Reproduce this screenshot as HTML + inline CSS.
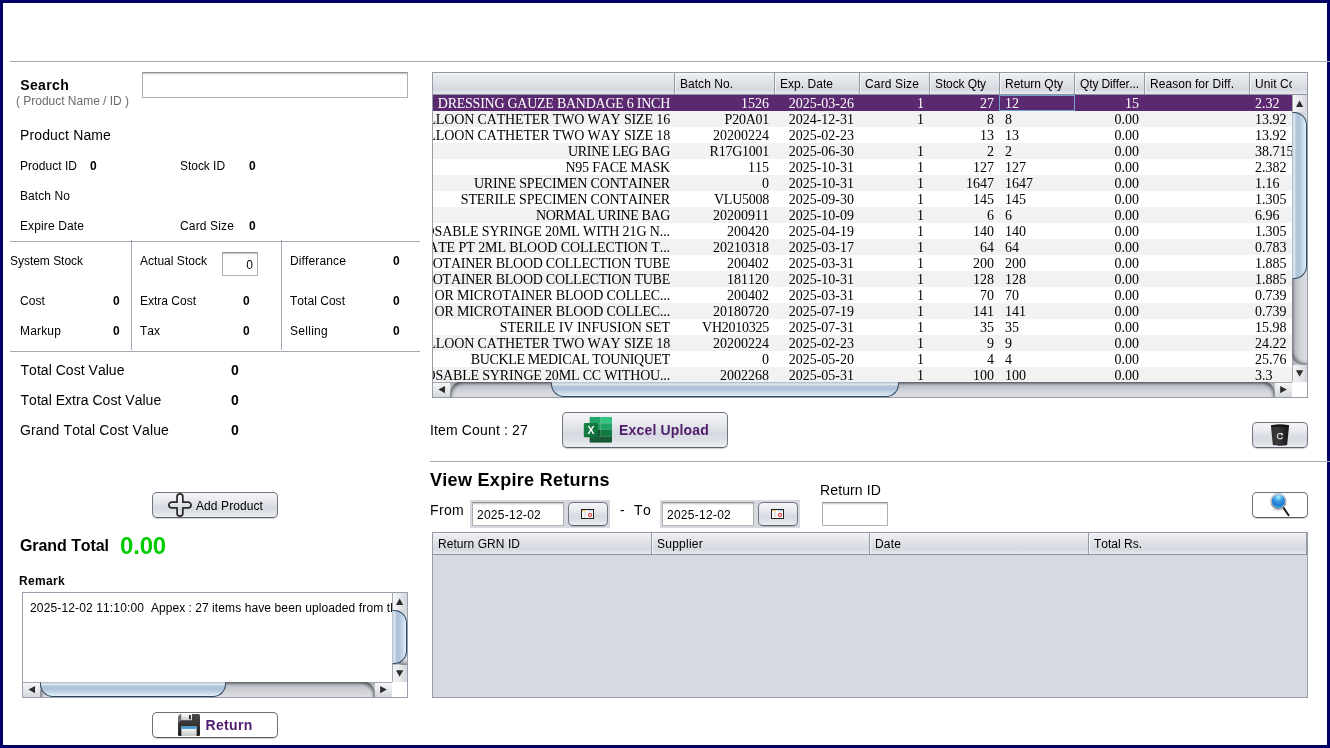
<!DOCTYPE html>
<html lang="en"><head><meta charset="utf-8"><title>Expire Return</title>
<style>
html,body{margin:0;padding:0;}
body{font-kerning:none;width:1330px;height:748px;position:relative;overflow:hidden;background:#fff;font-family:"Liberation Sans",Arial,sans-serif;font-size:12px;color:#000;}
body div,body svg{position:absolute;box-sizing:border-box;}
.t{white-space:pre;}
.frame{left:0;top:0;width:1330px;height:748px;border:3px solid #000066;z-index:5;pointer-events:none;}
.sep{background:#a2a8b4;z-index:6;}
.tf{background:#fff;border:1px solid #adadad;border-top-color:#8f8f8f;border-bottom-color:#b4b4b4;box-shadow:inset 0 1px 0 #d2d2d2,inset 0 2px 0 #efefef;}
.btn{border:1px solid #70757f;border-bottom-color:#5d626b;border-radius:5px;background:linear-gradient(#f5f6f8 0%,#e9ebef 30%,#d6d9e0 62%,#dcdfe5 78%,#eceef2 100%);box-shadow:0 1px 0 rgba(120,125,135,.35);}
.btnw{border:1px solid #6a6f78;border-bottom-color:#565b64;border-radius:5px;background:#fff;box-shadow:0 1px 0 rgba(120,125,135,.35);}
.hdr{background:linear-gradient(#f6f7f9 0%,#ecedf1 10%,#dfe1e6 48%,#d5d8df 78%,#dee1e7 90%,#e8eaef 100%);border-top:1px solid #9299a5;border-bottom:1px solid #8e949e;}
.hsep{width:2px;background:linear-gradient(to right,#9399a5 0,#9399a5 1px,#f4f5f7 1px,#f4f5f7 2px);}
.row{left:0;width:860px;height:16px;}
.c{top:0;height:16px;line-height:18px;font-family:"Liberation Serif","Times New Roman",serif;font-size:14px;white-space:pre;overflow:hidden;}
.r{text-align:right;}
.sel{background:#5a2970;color:#fff;}
.odd{background:#f2f2f2;}
.arrowbtn{background:linear-gradient(to right,#f4f5f7,#e6e8eb 50%,#d3d6db);border-left:1px solid #a3a8b1;}
.arrowbtnh{background:linear-gradient(#f4f5f7,#e6e8eb 50%,#d3d6db);border-top:1px solid #a3a8b1;}
</style></head><body><div id="root" style="left:0;top:0;width:1330px;height:748px;will-change:transform;">

<div class="frame"></div>
<div class="sep" style="left:10px;top:61px;width:1320px;height:1px;"></div>
<div class="sep" style="left:10px;top:241px;width:410px;height:1px;"></div>
<div class="sep" style="left:10px;top:351px;width:410px;height:1px;"></div>
<div class="sep" style="left:131px;top:240px;width:1px;height:110px;"></div>
<div class="sep" style="left:281px;top:240px;width:1px;height:110px;"></div>
<div class="sep" style="left:430px;top:461px;width:900px;height:1px;"></div>
<div class="t" style="top:77px;font-size:14px;line-height:16px;height:16px;left:20.3px;font-weight:bold;letter-spacing:0.35px;">Search</div>
<div class="t" style="top:94px;font-size:12px;line-height:14px;height:14px;left:16px;color:#6b6b6b;letter-spacing:-0.017px;">( Product Name / ID )</div>
<div class="tf" style="left:142px;top:72px;width:266px;height:26px;"></div>
<div class="t" style="top:127px;font-size:14px;line-height:16px;height:16px;left:20px;letter-spacing:0.127px;">Product Name</div>
<div class="t" style="top:159px;font-size:12px;line-height:14px;height:14px;left:20px;letter-spacing:0.031px;">Product ID</div>
<div class="t" style="top:159px;font-size:12px;line-height:14px;height:14px;left:90px;font-weight:bold;">0</div>
<div class="t" style="top:159px;font-size:12px;line-height:14px;height:14px;left:180px;letter-spacing:-0.043px;">Stock ID</div>
<div class="t" style="top:159px;font-size:12px;line-height:14px;height:14px;left:249px;font-weight:bold;">0</div>
<div class="t" style="top:189px;font-size:12px;line-height:14px;height:14px;left:20px;letter-spacing:0.08px;">Batch No</div>
<div class="t" style="top:219px;font-size:12px;line-height:14px;height:14px;left:20px;letter-spacing:0.119px;">Expire Date</div>
<div class="t" style="top:219px;font-size:12px;line-height:14px;height:14px;left:180px;letter-spacing:0.147px;">Card Size</div>
<div class="t" style="top:219px;font-size:12px;line-height:14px;height:14px;left:249px;font-weight:bold;">0</div>
<div class="t" style="top:254px;font-size:12px;line-height:14px;height:14px;left:10px;letter-spacing:-0.03px;">System Stock</div>
<div class="t" style="top:254px;font-size:12px;line-height:14px;height:14px;left:140px;letter-spacing:0.025px;">Actual Stock</div>
<div class="tf" style="left:222px;top:252px;width:36px;height:24px;"></div>
<div class="t" style="top:258px;font-size:12px;line-height:14px;height:14px;right:1077px;text-align:right;">0</div>
<div class="t" style="top:254px;font-size:12px;line-height:14px;height:14px;left:290px;letter-spacing:0.132px;">Differance</div>
<div class="t" style="top:254px;font-size:12px;line-height:14px;height:14px;left:393px;font-weight:bold;">0</div>
<div class="t" style="top:294px;font-size:12px;line-height:14px;height:14px;left:20px;letter-spacing:0.082px;">Cost</div>
<div class="t" style="top:294px;font-size:12px;line-height:14px;height:14px;left:113px;font-weight:bold;">0</div>
<div class="t" style="top:294px;font-size:12px;line-height:14px;height:14px;left:140px;">Extra Cost</div>
<div class="t" style="top:294px;font-size:12px;line-height:14px;height:14px;left:243px;font-weight:bold;">0</div>
<div class="t" style="top:294px;font-size:12px;line-height:14px;height:14px;left:290px;letter-spacing:0.032px;">Total Cost</div>
<div class="t" style="top:294px;font-size:12px;line-height:14px;height:14px;left:393px;font-weight:bold;">0</div>
<div class="t" style="top:324px;font-size:12px;line-height:14px;height:14px;left:20px;letter-spacing:0.165px;">Markup</div>
<div class="t" style="top:324px;font-size:12px;line-height:14px;height:14px;left:113px;font-weight:bold;">0</div>
<div class="t" style="top:324px;font-size:12px;line-height:14px;height:14px;left:140px;">Tax</div>
<div class="t" style="top:324px;font-size:12px;line-height:14px;height:14px;left:243px;font-weight:bold;">0</div>
<div class="t" style="top:324px;font-size:12px;line-height:14px;height:14px;left:290px;letter-spacing:0.284px;">Selling</div>
<div class="t" style="top:324px;font-size:12px;line-height:14px;height:14px;left:393px;font-weight:bold;">0</div>
<div class="t" style="top:362px;font-size:14px;line-height:16px;height:16px;left:20.5px;letter-spacing:0.03px;">Total Cost Value</div>
<div class="t" style="top:362px;font-size:14px;line-height:16px;height:16px;left:231px;font-weight:bold;">0</div>
<div class="t" style="top:392px;font-size:14px;line-height:16px;height:16px;left:20.5px;letter-spacing:0.03px;">Total Extra Cost Value</div>
<div class="t" style="top:392px;font-size:14px;line-height:16px;height:16px;left:231px;font-weight:bold;">0</div>
<div class="t" style="top:422px;font-size:14px;line-height:16px;height:16px;left:20px;letter-spacing:0.123px;">Grand Total Cost Value</div>
<div class="t" style="top:422px;font-size:14px;line-height:16px;height:16px;left:231px;font-weight:bold;">0</div>
<div class="btn" style="left:152px;top:492px;width:126px;height:26px;"></div>
<svg style="left:167px;top:492px" width="26" height="26" viewBox="0 0 26 26"><path d="M10.05 10.15 V4.85 A2.9 2.9 0 0 1 15.85 4.85 V10.15 H21.15 A2.9 2.9 0 0 1 21.15 15.95 H15.85 V21.25 A2.9 2.9 0 0 1 10.05 21.25 V15.95 H4.75 A2.9 2.9 0 0 1 4.75 10.15 Z" fill="none" stroke="#2b2b2b" stroke-width="1.75" stroke-linejoin="round"/></svg>
<div class="t" style="top:499px;font-size:12px;line-height:14px;height:14px;left:196px;letter-spacing:0.088px;">Add Product</div>
<div class="t" style="top:537px;font-size:16px;line-height:17px;height:17px;left:20px;font-weight:bold;letter-spacing:-0.072px;">Grand Total</div>
<div class="t" style="top:532px;font-size:24px;line-height:27px;height:27px;left:120px;font-weight:bold;color:#00cc00;letter-spacing:-0.176px;">0.00</div>
<div class="t" style="top:574px;font-size:12px;line-height:14px;height:14px;left:19px;font-weight:bold;letter-spacing:0.331px;">Remark</div>
<div style="left:22px;top:592px;width:386px;height:106px;border:1px solid #9aa1ae;background:#fff;"></div>
<div class="t" style="left:30px;top:601px;font-size:12px;line-height:14px;height:14px;width:362px;overflow:hidden;"><span style="letter-spacing:0.139px">2025-12-02 11:10:00  </span><span style="letter-spacing:0.027px">Appex : 27 </span><span style="letter-spacing:0.108px">items have been uploaded from the excel sheet</span></div>
<div class="btnw" style="left:152px;top:712px;width:126px;height:26px;"></div>
<svg style="left:177px;top:713px" width="24" height="24" viewBox="0 0 24 24">
<defs><linearGradient id="fl1" x1="0" y1="0" x2="0" y2="1"><stop offset="0" stop-color="#4a4a4a"/><stop offset="1" stop-color="#1c1c1c"/></linearGradient>
<linearGradient id="fl2" x1="0" y1="0" x2="0" y2="1"><stop offset="0" stop-color="#ffffff"/><stop offset="1" stop-color="#c9c9c9"/></linearGradient></defs>
<path d="M3.5 1 H21.5 a1.5 1.5 0 0 1 1.5 1.5 V21.5 a1.5 1.5 0 0 1 -1.5 1.5 H2.5 a1.5 1.5 0 0 1 -1.5 -1.5 V3.5 z" fill="url(#fl1)"/>
<path d="M3.6 1 L1 3.6 V10 L8 4.5 L6 1 z" fill="#7d7d7d" opacity=".8"/>
<rect x="4.2" y="1" width="10.8" height="6.2" fill="url(#fl2)"/>
<rect x="12" y="2" width="1.8" height="4.2" fill="#2b2b2b"/>
<rect x="4.4" y="13.6" width="15.2" height="9.4" fill="url(#fl2)"/>
<rect x="4.4" y="13.6" width="15.2" height="2.3" fill="#3d9ddd"/>
</svg>
<div class="t" style="top:717px;font-size:14px;line-height:16px;height:16px;left:205.6px;font-weight:bold;color:#4f1c6e;letter-spacing:0.3px;">Return</div>
<div style="left:432px;top:72px;width:876px;height:326px;border:1px solid #969ca8;border-top:none;background:#fff;"></div>
<div class="hdr" style="left:433px;top:72px;width:874px;height:23px;"></div>
<div class="hsep" style="left:674px;top:73px;width:2px;height:21px;"></div>
<div class="hsep" style="left:774px;top:73px;width:2px;height:21px;"></div>
<div class="hsep" style="left:859px;top:73px;width:2px;height:21px;"></div>
<div class="hsep" style="left:929px;top:73px;width:2px;height:21px;"></div>
<div class="hsep" style="left:999px;top:73px;width:2px;height:21px;"></div>
<div class="hsep" style="left:1074px;top:73px;width:2px;height:21px;"></div>
<div class="hsep" style="left:1144px;top:73px;width:2px;height:21px;"></div>
<div class="hsep" style="left:1249px;top:73px;width:2px;height:21px;"></div>
<div class="t" style="top:77px;font-size:12px;line-height:14px;height:14px;left:680px;letter-spacing:0.034px;">Batch No.</div>
<div class="t" style="top:77px;font-size:12px;line-height:14px;height:14px;left:780px;letter-spacing:0.034px;">Exp. Date</div>
<div class="t" style="top:77px;font-size:12px;line-height:14px;height:14px;left:865px;letter-spacing:0.147px;">Card Size</div>
<div class="t" style="top:77px;font-size:12px;line-height:14px;height:14px;left:935px;letter-spacing:-0.113px;">Stock Qty</div>
<div class="t" style="top:77px;font-size:12px;line-height:14px;height:14px;left:1005px;">Return Qty</div>
<div class="t" style="top:77px;font-size:12px;line-height:14px;height:14px;left:1080px;letter-spacing:-0.13px;">Qty Differ...</div>
<div class="t" style="top:77px;font-size:12px;line-height:14px;height:14px;left:1150px;letter-spacing:0.04px;">Reason for Diff.</div>
<div class="t" style="top:77px;font-size:12px;line-height:14px;height:14px;left:1255px;width:37px;overflow:hidden;letter-spacing:0.073px;">Unit Cost</div>
<div style="left:433px;top:95px;width:859px;height:287px;overflow:hidden;background:#fff;">
<div class="row sel" style="top:0px;">
<div class="c" style="left:0px;width:241px;"><div class="c" style="right:4px;overflow:visible;letter-spacing:-0.255px;">DRESSING GAUZE BANDAGE 6 INCH</div></div>
<div class="c r" style="left:242px;width:99px;padding-right:5px;">1526</div>
<div class="c r" style="left:342px;width:84px;padding-right:5px;">2025-03-26</div>
<div class="c r" style="left:427px;width:69px;padding-right:5px;">1</div>
<div class="c r" style="left:497px;width:69px;padding-right:5px;">27</div>
<div class="c" style="left:567px;width:74px;padding-left:5px;">12</div>
<div class="c r" style="left:642px;width:69px;padding-right:5px;">15</div>
<div class="c" style="left:817px;width:110px;padding-left:5px;">2.32</div>
</div>
<div class="row odd" style="top:16px;">
<div class="c" style="left:0px;width:241px;"><div class="c" style="right:4px;overflow:visible;letter-spacing:-0.144px;">FOLEY BALLOON CATHETER TWO WAY SIZE 16</div></div>
<div class="c r" style="left:242px;width:99px;padding-right:5px;letter-spacing:-0.25px;">P20A01</div>
<div class="c r" style="left:342px;width:84px;padding-right:5px;">2024-12-31</div>
<div class="c r" style="left:427px;width:69px;padding-right:5px;">1</div>
<div class="c r" style="left:497px;width:69px;padding-right:5px;">8</div>
<div class="c" style="left:567px;width:74px;padding-left:5px;">8</div>
<div class="c r" style="left:642px;width:69px;padding-right:5px;">0.00</div>
<div class="c" style="left:817px;width:110px;padding-left:5px;">13.92</div>
</div>
<div class="row" style="top:32px;">
<div class="c" style="left:0px;width:241px;"><div class="c" style="right:4px;overflow:visible;letter-spacing:-0.144px;">FOLEY BALLOON CATHETER TWO WAY SIZE 18</div></div>
<div class="c r" style="left:242px;width:99px;padding-right:5px;">20200224</div>
<div class="c r" style="left:342px;width:84px;padding-right:5px;">2025-02-23</div>
<div class="c r" style="left:497px;width:69px;padding-right:5px;">13</div>
<div class="c" style="left:567px;width:74px;padding-left:5px;">13</div>
<div class="c r" style="left:642px;width:69px;padding-right:5px;">0.00</div>
<div class="c" style="left:817px;width:110px;padding-left:5px;">13.92</div>
</div>
<div class="row odd" style="top:48px;">
<div class="c" style="left:0px;width:241px;"><div class="c" style="right:4px;overflow:visible;letter-spacing:-0.358px;">URINE LEG BAG</div></div>
<div class="c r" style="left:242px;width:99px;padding-right:5px;letter-spacing:-0.25px;">R17G1001</div>
<div class="c r" style="left:342px;width:84px;padding-right:5px;">2025-06-30</div>
<div class="c r" style="left:427px;width:69px;padding-right:5px;">1</div>
<div class="c r" style="left:497px;width:69px;padding-right:5px;">2</div>
<div class="c" style="left:567px;width:74px;padding-left:5px;">2</div>
<div class="c r" style="left:642px;width:69px;padding-right:5px;">0.00</div>
<div class="c" style="left:817px;width:110px;padding-left:5px;">38.715</div>
</div>
<div class="row" style="top:64px;">
<div class="c" style="left:0px;width:241px;"><div class="c" style="right:4px;overflow:visible;letter-spacing:-0.215px;">N95 FACE MASK</div></div>
<div class="c r" style="left:242px;width:99px;padding-right:5px;">115</div>
<div class="c r" style="left:342px;width:84px;padding-right:5px;">2025-10-31</div>
<div class="c r" style="left:427px;width:69px;padding-right:5px;">1</div>
<div class="c r" style="left:497px;width:69px;padding-right:5px;">127</div>
<div class="c" style="left:567px;width:74px;padding-left:5px;">127</div>
<div class="c r" style="left:642px;width:69px;padding-right:5px;">0.00</div>
<div class="c" style="left:817px;width:110px;padding-left:5px;">2.382</div>
</div>
<div class="row odd" style="top:80px;">
<div class="c" style="left:0px;width:241px;"><div class="c" style="right:4px;overflow:visible;letter-spacing:-0.158px;">URINE SPECIMEN CONTAINER</div></div>
<div class="c r" style="left:242px;width:99px;padding-right:5px;">0</div>
<div class="c r" style="left:342px;width:84px;padding-right:5px;">2025-10-31</div>
<div class="c r" style="left:427px;width:69px;padding-right:5px;">1</div>
<div class="c r" style="left:497px;width:69px;padding-right:5px;">1647</div>
<div class="c" style="left:567px;width:74px;padding-left:5px;">1647</div>
<div class="c r" style="left:642px;width:69px;padding-right:5px;">0.00</div>
<div class="c" style="left:817px;width:110px;padding-left:5px;">1.16</div>
</div>
<div class="row" style="top:96px;">
<div class="c" style="left:0px;width:241px;"><div class="c" style="right:4px;overflow:visible;letter-spacing:-0.15px;">STERILE SPECIMEN CONTAINER</div></div>
<div class="c r" style="left:242px;width:99px;padding-right:5px;letter-spacing:-0.25px;">VLU5008</div>
<div class="c r" style="left:342px;width:84px;padding-right:5px;">2025-09-30</div>
<div class="c r" style="left:427px;width:69px;padding-right:5px;">1</div>
<div class="c r" style="left:497px;width:69px;padding-right:5px;">145</div>
<div class="c" style="left:567px;width:74px;padding-left:5px;">145</div>
<div class="c r" style="left:642px;width:69px;padding-right:5px;">0.00</div>
<div class="c" style="left:817px;width:110px;padding-left:5px;">1.305</div>
</div>
<div class="row odd" style="top:112px;">
<div class="c" style="left:0px;width:241px;"><div class="c" style="right:4px;overflow:visible;letter-spacing:-0.369px;">NORMAL URINE BAG</div></div>
<div class="c r" style="left:242px;width:99px;padding-right:5px;">20200911</div>
<div class="c r" style="left:342px;width:84px;padding-right:5px;">2025-10-09</div>
<div class="c r" style="left:427px;width:69px;padding-right:5px;">1</div>
<div class="c r" style="left:497px;width:69px;padding-right:5px;">6</div>
<div class="c" style="left:567px;width:74px;padding-left:5px;">6</div>
<div class="c r" style="left:642px;width:69px;padding-right:5px;">0.00</div>
<div class="c" style="left:817px;width:110px;padding-left:5px;">6.96</div>
</div>
<div class="row" style="top:128px;">
<div class="c" style="left:0px;width:241px;"><div class="c" style="right:4px;overflow:visible;letter-spacing:-0.105px;">DISPOSABLE SYRINGE 20ML WITH 21G N...</div></div>
<div class="c r" style="left:242px;width:99px;padding-right:5px;">200420</div>
<div class="c r" style="left:342px;width:84px;padding-right:5px;">2025-04-19</div>
<div class="c r" style="left:427px;width:69px;padding-right:5px;">1</div>
<div class="c r" style="left:497px;width:69px;padding-right:5px;">140</div>
<div class="c" style="left:567px;width:74px;padding-left:5px;">140</div>
<div class="c r" style="left:642px;width:69px;padding-right:5px;">0.00</div>
<div class="c" style="left:817px;width:110px;padding-left:5px;">1.305</div>
</div>
<div class="row odd" style="top:144px;">
<div class="c" style="left:0px;width:241px;"><div class="c" style="right:4px;overflow:visible;letter-spacing:-0.072px;">SODIUM CITRATE PT 2ML BLOOD COLLECTION T...</div></div>
<div class="c r" style="left:242px;width:99px;padding-right:5px;">20210318</div>
<div class="c r" style="left:342px;width:84px;padding-right:5px;">2025-03-17</div>
<div class="c r" style="left:427px;width:69px;padding-right:5px;">1</div>
<div class="c r" style="left:497px;width:69px;padding-right:5px;">64</div>
<div class="c" style="left:567px;width:74px;padding-left:5px;">64</div>
<div class="c r" style="left:642px;width:69px;padding-right:5px;">0.00</div>
<div class="c" style="left:817px;width:110px;padding-left:5px;">0.783</div>
</div>
<div class="row" style="top:160px;">
<div class="c" style="left:0px;width:241px;"><div class="c" style="right:4px;overflow:visible;letter-spacing:-0.252px;">EDTA MICROTAINER BLOOD COLLECTION TUBE</div></div>
<div class="c r" style="left:242px;width:99px;padding-right:5px;">200402</div>
<div class="c r" style="left:342px;width:84px;padding-right:5px;">2025-03-31</div>
<div class="c r" style="left:427px;width:69px;padding-right:5px;">1</div>
<div class="c r" style="left:497px;width:69px;padding-right:5px;">200</div>
<div class="c" style="left:567px;width:74px;padding-left:5px;">200</div>
<div class="c r" style="left:642px;width:69px;padding-right:5px;">0.00</div>
<div class="c" style="left:817px;width:110px;padding-left:5px;">1.885</div>
</div>
<div class="row odd" style="top:176px;">
<div class="c" style="left:0px;width:241px;"><div class="c" style="right:4px;overflow:visible;letter-spacing:-0.252px;">PLAIN MICROTAINER BLOOD COLLECTION TUBE</div></div>
<div class="c r" style="left:242px;width:99px;padding-right:5px;">181120</div>
<div class="c r" style="left:342px;width:84px;padding-right:5px;">2025-10-31</div>
<div class="c r" style="left:427px;width:69px;padding-right:5px;">1</div>
<div class="c r" style="left:497px;width:69px;padding-right:5px;">128</div>
<div class="c" style="left:567px;width:74px;padding-left:5px;">128</div>
<div class="c r" style="left:642px;width:69px;padding-right:5px;">0.00</div>
<div class="c" style="left:817px;width:110px;padding-left:5px;">1.885</div>
</div>
<div class="row" style="top:192px;">
<div class="c" style="left:0px;width:241px;"><div class="c" style="right:4px;overflow:visible;letter-spacing:-0.165px;">CAPILLARY TUBE OR MICROTAINER BLOOD COLLEC...</div></div>
<div class="c r" style="left:242px;width:99px;padding-right:5px;">200402</div>
<div class="c r" style="left:342px;width:84px;padding-right:5px;">2025-03-31</div>
<div class="c r" style="left:427px;width:69px;padding-right:5px;">1</div>
<div class="c r" style="left:497px;width:69px;padding-right:5px;">70</div>
<div class="c" style="left:567px;width:74px;padding-left:5px;">70</div>
<div class="c r" style="left:642px;width:69px;padding-right:5px;">0.00</div>
<div class="c" style="left:817px;width:110px;padding-left:5px;">0.739</div>
</div>
<div class="row odd" style="top:208px;">
<div class="c" style="left:0px;width:241px;"><div class="c" style="right:4px;overflow:visible;letter-spacing:-0.165px;">CAPILLARY TUBE OR MICROTAINER BLOOD COLLEC...</div></div>
<div class="c r" style="left:242px;width:99px;padding-right:5px;">20180720</div>
<div class="c r" style="left:342px;width:84px;padding-right:5px;">2025-07-19</div>
<div class="c r" style="left:427px;width:69px;padding-right:5px;">1</div>
<div class="c r" style="left:497px;width:69px;padding-right:5px;">141</div>
<div class="c" style="left:567px;width:74px;padding-left:5px;">141</div>
<div class="c r" style="left:642px;width:69px;padding-right:5px;">0.00</div>
<div class="c" style="left:817px;width:110px;padding-left:5px;">0.739</div>
</div>
<div class="row" style="top:224px;">
<div class="c" style="left:0px;width:241px;"><div class="c" style="right:4px;overflow:visible;letter-spacing:-0.054px;">STERILE IV INFUSION SET</div></div>
<div class="c r" style="left:242px;width:99px;padding-right:5px;letter-spacing:-0.25px;">VH2010325</div>
<div class="c r" style="left:342px;width:84px;padding-right:5px;">2025-07-31</div>
<div class="c r" style="left:427px;width:69px;padding-right:5px;">1</div>
<div class="c r" style="left:497px;width:69px;padding-right:5px;">35</div>
<div class="c" style="left:567px;width:74px;padding-left:5px;">35</div>
<div class="c r" style="left:642px;width:69px;padding-right:5px;">0.00</div>
<div class="c" style="left:817px;width:110px;padding-left:5px;">15.98</div>
</div>
<div class="row odd" style="top:240px;">
<div class="c" style="left:0px;width:241px;"><div class="c" style="right:4px;overflow:visible;letter-spacing:-0.144px;">FOLEY BALLOON CATHETER TWO WAY SIZE 18</div></div>
<div class="c r" style="left:242px;width:99px;padding-right:5px;">20200224</div>
<div class="c r" style="left:342px;width:84px;padding-right:5px;">2025-02-23</div>
<div class="c r" style="left:427px;width:69px;padding-right:5px;">1</div>
<div class="c r" style="left:497px;width:69px;padding-right:5px;">9</div>
<div class="c" style="left:567px;width:74px;padding-left:5px;">9</div>
<div class="c r" style="left:642px;width:69px;padding-right:5px;">0.00</div>
<div class="c" style="left:817px;width:110px;padding-left:5px;">24.22</div>
</div>
<div class="row" style="top:256px;">
<div class="c" style="left:0px;width:241px;"><div class="c" style="right:4px;overflow:visible;letter-spacing:-0.348px;">BUCKLE MEDICAL TOUNIQUET</div></div>
<div class="c r" style="left:242px;width:99px;padding-right:5px;">0</div>
<div class="c r" style="left:342px;width:84px;padding-right:5px;">2025-05-20</div>
<div class="c r" style="left:427px;width:69px;padding-right:5px;">1</div>
<div class="c r" style="left:497px;width:69px;padding-right:5px;">4</div>
<div class="c" style="left:567px;width:74px;padding-left:5px;">4</div>
<div class="c r" style="left:642px;width:69px;padding-right:5px;">0.00</div>
<div class="c" style="left:817px;width:110px;padding-left:5px;">25.76</div>
</div>
<div class="row odd" style="top:272px;">
<div class="c" style="left:0px;width:241px;"><div class="c" style="right:4px;overflow:visible;letter-spacing:-0.175px;">DISPOSABLE SYRINGE 20ML CC WITHOU...</div></div>
<div class="c r" style="left:242px;width:99px;padding-right:5px;">2002268</div>
<div class="c r" style="left:342px;width:84px;padding-right:5px;">2025-05-31</div>
<div class="c r" style="left:427px;width:69px;padding-right:5px;">1</div>
<div class="c r" style="left:497px;width:69px;padding-right:5px;">100</div>
<div class="c" style="left:567px;width:74px;padding-left:5px;">100</div>
<div class="c r" style="left:642px;width:69px;padding-right:5px;">0.00</div>
<div class="c" style="left:817px;width:110px;padding-left:5px;">3.3</div>
</div>
<div style="left:566px;top:0;width:76px;height:16px;border:1px solid #73a4d1;"></div>
</div>
<div style="left:1292px;top:95px;width:15px;height:287px;background:linear-gradient(to right,#9da0a8 0,#b9bcc3 3px,#cfd1d7 8px,#dcdee2 100%);">
<div class="arrowbtn" style="left:0;top:0;width:15px;height:17px;"></div>
<svg style="left:0;top:0" width="15" height="17" viewBox="0 0 15 17"><path d="M7.6 5.4 L11.2 12 H4 z" fill="#2d2d2d"/></svg>
<div style="left:0;top:17px;width:15px;height:253px;overflow:hidden;"><div style="left:-1px;top:-12px;width:29px;height:265px;border-radius:0 0 0 13px;box-shadow:inset 2px -2px 3px rgba(60,62,70,.55);"></div></div>
<div class="arrowbtn" style="left:0;top:270px;width:15px;height:17px;"></div>
<svg style="left:0;top:270px" width="15" height="17" viewBox="0 0 15 17"><path d="M7.6 11.8 L11.2 5.2 H4 z" fill="#2d2d2d"/></svg>
<div style="left:0;top:17px;width:15px;height:167px;border:1px solid #2e4862;border-left:1px solid #b5c2cf;border-radius:0 13px 13px 0;background:linear-gradient(to right,#b5c2cf 0,#eaf0f5 1px,#b3c7db 3px,#aec3d9 6px,#c9dbeb 10px,#e3f1fa 13px,#e3f1fa 100%);"></div>
</div>
<div style="left:433px;top:382px;width:859px;height:15px;background:linear-gradient(#9da0a8 0,#b9bcc3 3px,#cfd1d7 8px,#dcdee2 100%);">
<div class="arrowbtnh" style="left:0;top:0;width:17px;height:15px;"></div>
<svg style="left:0;top:0" width="17" height="15" viewBox="0 0 17 15"><path d="M5.4 7.6 L12 4 V11.2 z" fill="#2d2d2d"/></svg>
<div style="left:17px;top:0;width:825px;height:15px;overflow:hidden;"><div style="left:0;top:-1px;width:825px;height:29px;border-radius:13px 13px 0 0 / 13px 13px 0 0;box-shadow:inset 2px 2px 3px rgba(60,62,70,.55), inset -2px 2px 3px rgba(60,62,70,.55);"></div></div>
<div class="arrowbtnh" style="left:842px;top:0;width:17px;height:15px;"></div>
<svg style="left:842px;top:0" width="17" height="15" viewBox="0 0 17 15"><path d="M11.8 7.6 L5.2 4 V11.2 z" fill="#2d2d2d"/></svg>
<div style="left:118px;top:0;width:348px;height:15px;border:1px solid #2e4862;border-top:1px solid #b5c2cf;border-radius:0 0 13px 13px;background:linear-gradient(#b5c2cf 0,#eaf0f5 1px,#b3c7db 3px,#aec3d9 6px,#c9dbeb 10px,#e3f1fa 13px,#e3f1fa 100%);"></div>
</div>
<div class="t" style="top:422px;font-size:14px;line-height:16px;height:16px;left:430px;letter-spacing:0.145px;">Item Count :</div>
<div class="t" style="top:422px;font-size:14px;line-height:16px;height:16px;left:512px;letter-spacing:0.216px;">27</div>
<div class="btn" style="left:562px;top:412px;width:166px;height:36px;"></div>
<svg style="left:583px;top:416px" width="30" height="28" viewBox="0 0 30 28">
<defs><clipPath id="xs"><rect x="6.4" y="0.8" width="22.6" height="26" rx="1.3"/></clipPath>
<linearGradient id="xg" x1="0" y1="0" x2="1" y2="1"><stop offset="0" stop-color="#18884a"/><stop offset="1" stop-color="#0b6a37"/></linearGradient></defs>
<g clip-path="url(#xs)">
<rect x="6.4" y="0.8" width="11.3" height="6.5" fill="#21a366"/><rect x="17.7" y="0.8" width="11.3" height="6.5" fill="#33c481"/>
<rect x="6.4" y="7.3" width="11.3" height="6.5" fill="#2ea56c"/><rect x="17.7" y="7.3" width="11.3" height="6.5" fill="#21a366"/>
<rect x="6.4" y="13.8" width="11.3" height="6.5" fill="#185c37"/><rect x="17.7" y="13.8" width="11.3" height="6.5" fill="#107c41"/>
<rect x="6.4" y="20.3" width="22.6" height="6.5" fill="#185c37"/>
<rect x="15" y="6.6" width="1.6" height="15" fill="#000" opacity=".12"/>
</g>
<rect x="0.8" y="7" width="14.2" height="14.2" rx="1.2" fill="url(#xg)"/>
<text x="7.9" y="17.6" text-anchor="middle" font-family="Liberation Sans, Arial, sans-serif" font-weight="bold" font-size="10.5" fill="#fff">X</text>
</svg>
<div class="t" style="top:422px;font-size:14px;line-height:16px;height:16px;left:619px;font-weight:bold;color:#4f1c6e;letter-spacing:0.173px;">Excel Upload</div>
<div class="btn" style="left:1252px;top:422px;width:56px;height:26px;"></div>
<svg style="left:1268px;top:423px" width="24" height="24" viewBox="0 0 24 24">
<defs><linearGradient id="tg" x1="0" y1="0" x2="1" y2="0"><stop offset="0" stop-color="#2a2a2a"/><stop offset=".35" stop-color="#3b3b3b"/><stop offset="1" stop-color="#161616"/></linearGradient></defs>
<path d="M2.9 2.6 C2.9 1.2 21.1 1.2 21.1 2.6 L19.2 21.6 C19.1 23.2 4.9 23.2 4.8 21.6 z" fill="url(#tg)"/>
<ellipse cx="12" cy="2.7" rx="8.6" ry="1.1" fill="#111"/>
<path d="M14.2 11.6 A2.7 2.7 0 1 0 14.6 14.0" fill="none" stroke="#e4e4e4" stroke-width="1.05"/>
<path d="M12.7 9.7 L15.5 10.9 L13.4 12.8 z" fill="#e4e4e4"/>
</svg>
<div class="t" style="top:470px;font-size:18px;line-height:20px;height:20px;left:430px;font-weight:bold;letter-spacing:0.3px;">View Expire Returns</div>
<div class="t" style="top:502px;font-size:14px;line-height:16px;height:16px;left:430px;letter-spacing:0.335px;">From</div>
<div style="left:470px;top:500px;width:140px;height:28px;background:#d6d9df;"></div>
<div class="tf" style="left:472px;top:502px;width:92px;height:24px;"></div>
<div class="t" style="top:508px;font-size:12px;line-height:14px;height:14px;left:477px;letter-spacing:0.263px;">2025-12-02</div>
<div class="btn" style="left:568px;top:502px;width:40px;height:24px;"></div>
<svg style="left:580px;top:508px" width="16" height="12" viewBox="0 0 16 12">
<rect x="1.5" y="1.5" width="12" height="9" fill="#fff" stroke="#1e1e1e" stroke-width="1"/>
<rect x="2.2" y="2.3" width="4.2" height="1" fill="#f5b52e"/><rect x="8" y="2.3" width="4.6" height="1" fill="#9cc7f0"/>
<rect x="3.6" y="4" width="2.6" height="5.8" fill="#e2e2e2"/>
<circle cx="10" cy="7" r="1.6" fill="none" stroke="#e5393b" stroke-width="1.1"/>
</svg>
<div class="t" style="top:502px;font-size:14px;line-height:16px;height:16px;left:620px;">-</div>
<div class="t" style="top:502px;font-size:14px;line-height:16px;height:16px;left:634px;letter-spacing:0.331px;">To</div>
<div style="left:660px;top:500px;width:140px;height:28px;background:#d6d9df;"></div>
<div class="tf" style="left:662px;top:502px;width:92px;height:24px;"></div>
<div class="t" style="top:508px;font-size:12px;line-height:14px;height:14px;left:667px;letter-spacing:0.263px;">2025-12-02</div>
<div class="btn" style="left:758px;top:502px;width:40px;height:24px;"></div>
<svg style="left:770px;top:508px" width="16" height="12" viewBox="0 0 16 12">
<rect x="1.5" y="1.5" width="12" height="9" fill="#fff" stroke="#1e1e1e" stroke-width="1"/>
<rect x="2.2" y="2.3" width="4.2" height="1" fill="#f5b52e"/><rect x="8" y="2.3" width="4.6" height="1" fill="#9cc7f0"/>
<rect x="3.6" y="4" width="2.6" height="5.8" fill="#e2e2e2"/>
<circle cx="10" cy="7" r="1.6" fill="none" stroke="#e5393b" stroke-width="1.1"/>
</svg>
<div class="t" style="top:482px;font-size:14px;line-height:16px;height:16px;left:820px;letter-spacing:0.122px;">Return ID</div>
<div class="tf" style="left:822px;top:502px;width:66px;height:24px;"></div>
<div class="btnw" style="left:1252px;top:492px;width:56px;height:26px;"></div>
<svg style="left:1268px;top:492px" width="24" height="26" viewBox="0 0 24 26">
<defs><radialGradient id="lg" cx=".5" cy=".2" r=".9"><stop offset="0" stop-color="#a8f4ff"/><stop offset=".35" stop-color="#3b9be3"/><stop offset=".6" stop-color="#1f78d2"/><stop offset="1" stop-color="#35c6f4"/></radialGradient></defs>
<ellipse cx="10.6" cy="17.6" rx="6.5" ry="1.6" fill="#000" opacity=".10"/>
<path d="M15.2 15.4 L20.6 23.2" stroke="#1d1d1d" stroke-width="2" stroke-linecap="round"/>
<circle cx="10.4" cy="9.3" r="7.3" fill="url(#lg)" stroke="#c9cfd2" stroke-width="1.3"/>
<circle cx="10.4" cy="9.3" r="8" fill="none" stroke="#8b9296" stroke-width=".5" opacity=".7"/>
<path d="M3.4 11.6 A7.4 7.4 0 0 0 17.4 11.6" fill="none" stroke="#5f6468" stroke-width="1" opacity=".75"/>
</svg>
<div style="left:432px;top:532px;width:876px;height:166px;border:1px solid #969ca8;border-top:none;background:#d6d9df;"></div>
<div class="hdr" style="left:433px;top:532px;width:874px;height:23px;"></div>
<div class="hsep" style="left:651px;top:533px;width:2px;height:21px;"></div>
<div class="hsep" style="left:869px;top:533px;width:2px;height:21px;"></div>
<div class="hsep" style="left:1088px;top:533px;width:2px;height:21px;"></div>
<div style="left:1306px;top:533px;width:1px;height:21px;background:#9399a5;"></div>
<div class="t" style="top:537px;font-size:12px;line-height:14px;height:14px;left:438px;letter-spacing:0.05px;">Return GRN ID</div>
<div class="t" style="top:537px;font-size:12px;line-height:14px;height:14px;left:657px;letter-spacing:0.248px;">Supplier</div>
<div class="t" style="top:537px;font-size:12px;line-height:14px;height:14px;left:875px;letter-spacing:0.164px;">Date</div>
<div class="t" style="top:537px;font-size:12px;line-height:14px;height:14px;left:1094px;">Total Rs.</div>
<div style="left:392px;top:593px;width:15px;height:89px;background:linear-gradient(to right,#9da0a8 0,#b9bcc3 3px,#cfd1d7 8px,#dcdee2 100%);">
<div class="arrowbtn" style="left:0;top:0;width:15px;height:17px;"></div>
<svg style="left:0;top:0" width="15" height="17" viewBox="0 0 15 17"><path d="M7.6 5.4 L11.2 12 H4 z" fill="#2d2d2d"/></svg>
<div style="left:0;top:17px;width:15px;height:55px;overflow:hidden;"><div style="left:-1px;top:-12px;width:29px;height:67px;border-radius:0 0 0 13px;box-shadow:inset 2px -2px 3px rgba(60,62,70,.55);"></div></div>
<div class="arrowbtn" style="left:0;top:72px;width:15px;height:17px;"></div>
<svg style="left:0;top:72px" width="15" height="17" viewBox="0 0 15 17"><path d="M7.6 11.8 L11.2 5.2 H4 z" fill="#2d2d2d"/></svg>
<div style="left:0;top:17px;width:15px;height:54px;border:1px solid #2e4862;border-left:1px solid #b5c2cf;border-radius:0 13px 13px 0;background:linear-gradient(to right,#b5c2cf 0,#eaf0f5 1px,#b3c7db 3px,#aec3d9 6px,#c9dbeb 10px,#e3f1fa 13px,#e3f1fa 100%);"></div>
</div>
<div style="left:23px;top:682px;width:369px;height:15px;background:linear-gradient(#9da0a8 0,#b9bcc3 3px,#cfd1d7 8px,#dcdee2 100%);">
<div class="arrowbtnh" style="left:0;top:0;width:17px;height:15px;"></div>
<svg style="left:0;top:0" width="17" height="15" viewBox="0 0 17 15"><path d="M5.4 7.6 L12 4 V11.2 z" fill="#2d2d2d"/></svg>
<div style="left:17px;top:0;width:335px;height:15px;overflow:hidden;"><div style="left:0;top:-1px;width:335px;height:29px;border-radius:13px 13px 0 0 / 13px 13px 0 0;box-shadow:inset 2px 2px 3px rgba(60,62,70,.55), inset -2px 2px 3px rgba(60,62,70,.55);"></div></div>
<div class="arrowbtnh" style="left:352px;top:0;width:17px;height:15px;"></div>
<svg style="left:352px;top:0" width="17" height="15" viewBox="0 0 17 15"><path d="M11.8 7.6 L5.2 4 V11.2 z" fill="#2d2d2d"/></svg>
<div style="left:17px;top:0;width:186px;height:15px;border:1px solid #2e4862;border-top:1px solid #b5c2cf;border-radius:0 0 13px 13px;background:linear-gradient(#b5c2cf 0,#eaf0f5 1px,#b3c7db 3px,#aec3d9 6px,#c9dbeb 10px,#e3f1fa 13px,#e3f1fa 100%);"></div>
</div>
</div></body></html>
